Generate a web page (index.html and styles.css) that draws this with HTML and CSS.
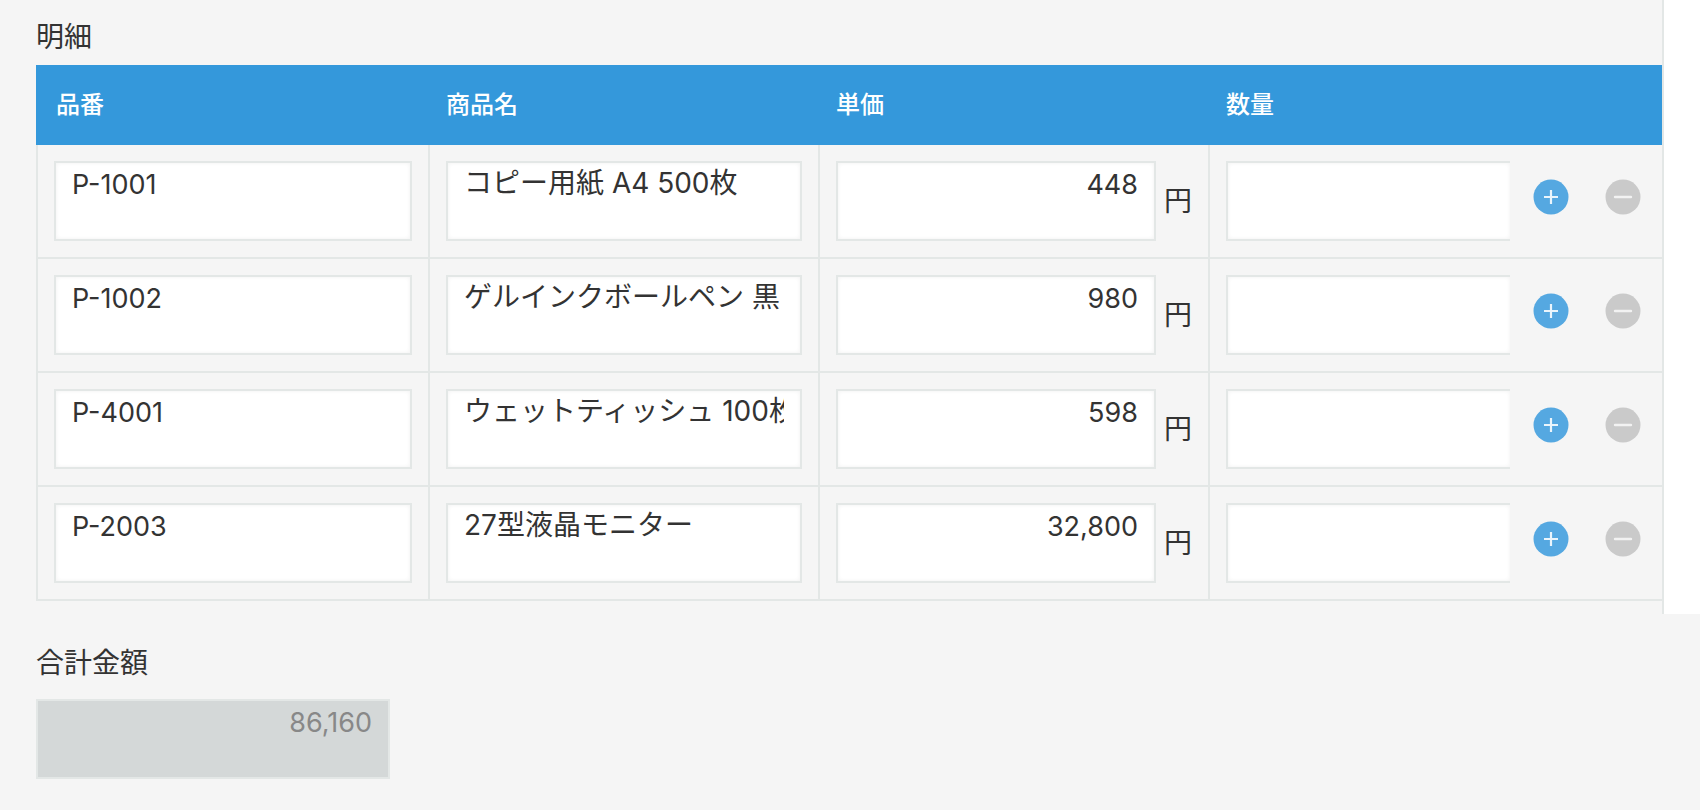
FILE: index.html
```html
<!DOCTYPE html>
<html lang="ja">
<head>
<meta charset="utf-8">
<meta name="viewport" content="width=device-width, initial-scale=1">
<title>明細</title>
<link rel="stylesheet" href="styles.css">
</head>
<body>
<svg class="sprite" aria-hidden="true">
  <symbol id="icon-add" viewBox="0 0 36 36">
    <circle cx="18" cy="18" r="17.5" fill="#55a8e1"/>
    <path d="M11 18h14M18 11v14" stroke="#fff" stroke-opacity=".88" stroke-width="2.2" fill="none"/>
  </symbol>
  <symbol id="icon-remove" viewBox="0 0 36 36">
    <circle cx="18" cy="18" r="17.5" fill="#cacaca"/>
    <path d="M10 18h16" stroke="#fff" stroke-opacity=".75" stroke-width="2.4" stroke-linecap="round" fill="none"/>
  </symbol>
</svg>
<main>
  <section class="details">
    <div class="panel">
      <h2 class="label" id="details-title">明細</h2>
      <table class="grid" aria-labelledby="details-title">
        <colgroup>
          <col class="col-code"><col><col><col class="col-qty"><col class="col-actions">
        </colgroup>
        <thead>
          <tr><th scope="col">品番</th><th scope="col">商品名</th><th scope="col">単価</th><th scope="col">数量</th><th></th></tr>
        </thead>
        <tbody>
          <tr>
            <td><input class="field" aria-label="品番" value="P-1001"></td>
            <td><input class="field name" aria-label="商品名" value="コピー用紙 A4 500枚"></td>
            <td><label class="price"><input class="field number" aria-label="単価" value="448"><span>円</span></label></td>
            <td class="qty"><input class="field number open" aria-label="数量"></td>
            <td class="actions"><div class="buttons"><button class="icon" type="button" aria-label="行を追加"><svg><use href="#icon-add"/></svg></button><button class="icon" type="button" aria-label="行を削除"><svg><use href="#icon-remove"/></svg></button></div></td>
          </tr>
          <tr>
            <td><input class="field" aria-label="品番" value="P-1002"></td>
            <td><input class="field name" aria-label="商品名" value="ゲルインクボールペン 黒"></td>
            <td><label class="price"><input class="field number" aria-label="単価" value="980"><span>円</span></label></td>
            <td class="qty"><input class="field number open" aria-label="数量"></td>
            <td class="actions"><div class="buttons"><button class="icon" type="button" aria-label="行を追加"><svg><use href="#icon-add"/></svg></button><button class="icon" type="button" aria-label="行を削除"><svg><use href="#icon-remove"/></svg></button></div></td>
          </tr>
          <tr>
            <td><input class="field" aria-label="品番" value="P-4001"></td>
            <td><input class="field name" aria-label="商品名" value="ウェットティッシュ 100枚"></td>
            <td><label class="price"><input class="field number" aria-label="単価" value="598"><span>円</span></label></td>
            <td class="qty"><input class="field number open" aria-label="数量"></td>
            <td class="actions"><div class="buttons"><button class="icon" type="button" aria-label="行を追加"><svg><use href="#icon-add"/></svg></button><button class="icon" type="button" aria-label="行を削除"><svg><use href="#icon-remove"/></svg></button></div></td>
          </tr>
          <tr>
            <td><input class="field" aria-label="品番" value="P-2003"></td>
            <td><input class="field name" aria-label="商品名" value="27型液晶モニター"></td>
            <td><label class="price"><input class="field number" aria-label="単価" value="32,800"><span>円</span></label></td>
            <td class="qty"><input class="field number open" aria-label="数量"></td>
            <td class="actions"><div class="buttons"><button class="icon" type="button" aria-label="行を追加"><svg><use href="#icon-add"/></svg></button><button class="icon" type="button" aria-label="行を削除"><svg><use href="#icon-remove"/></svg></button></div></td>
          </tr>
        </tbody>
      </table>
    </div>
  </section>
  <section class="total">
    <label class="label" for="total">合計金額</label>
    <input class="field number total-field" id="total" value="86,160" disabled>
  </section>
</main>
</body>
</html>
```
FILE: styles.css
```css
*, *::before, *::after {
  box-sizing: border-box;
}

body {
  margin: 0;
  background: #f5f5f5;
  color: #333;
  font: 28px/40px Inter, "Noto Sans CJK JP", sans-serif;
}

.sprite {
  display: none;
}

.details {
  padding-right: 36px;
  background: #fff;
}

.panel {
  padding: 17px 0 13px 36px;
  background: #f5f5f5;
  border-right: 2px solid #e3e7e6;
}

.label {
  display: block;
  margin: 0;
  font-size: 28px;
  font-weight: 400;
  line-height: 40px;
}

.grid {
  width: 100%;
  margin-top: 8px;
  table-layout: fixed;
  border-collapse: separate;
  border-spacing: 0;
}

.col-code {
  width: 394px;
}

.col-qty {
  width: 300px;
}

.col-actions {
  width: 152px;
}

th {
  height: 80px;
  padding: 0 16px;
  background: #3498db;
  color: #fff;
  font-size: 24px;
  font-weight: 500;
  text-align: left;
}

td {
  padding: 16px;
  border-right: 2px solid #e3e7e6;
  border-bottom: 2px solid #e3e7e6;
}

th:first-child {
  padding-left: 20px;
}

td:first-child {
  border-left: 2px solid #e3e7e6;
}

.qty {
  padding-right: 0;
  border-right: 0;
}

.actions {
  padding: 16px 21px 16px 23px;
  border-right: 0;
  vertical-align: top;
}

.field {
  display: block;
  width: 100%;
  min-width: 0;
  height: 80px;
  margin: 0;
  padding: 0 16px 34px;
  border: 2px solid #e3e7e6;
  border-radius: 0;
  background: #fff;
  box-shadow: inset 0 0 4px #f1f1f1;
  color: #333;
  font: inherit;
  font-size: 27px;
}

.name {
  padding-bottom: 40px;
  font-size: 28px;
}

.number {
  text-align: right;
}

.open {
  border-right: 0;
}

.price {
  display: flex;
  align-items: center;
  gap: 8px;
}

.buttons {
  display: flex;
  justify-content: space-between;
  padding-top: 18px;
}

.icon {
  width: 36px;
  height: 36px;
  padding: 0;
  border: 0;
  background: none;
}

.icon svg {
  display: block;
  width: 36px;
  height: 36px;
}

.total {
  padding: 29px 36px;
}

.total-field {
  width: 354px;
  margin-top: 16px;
  background: #d4d8d8;
  box-shadow: none;
  color: #888;
}
```
